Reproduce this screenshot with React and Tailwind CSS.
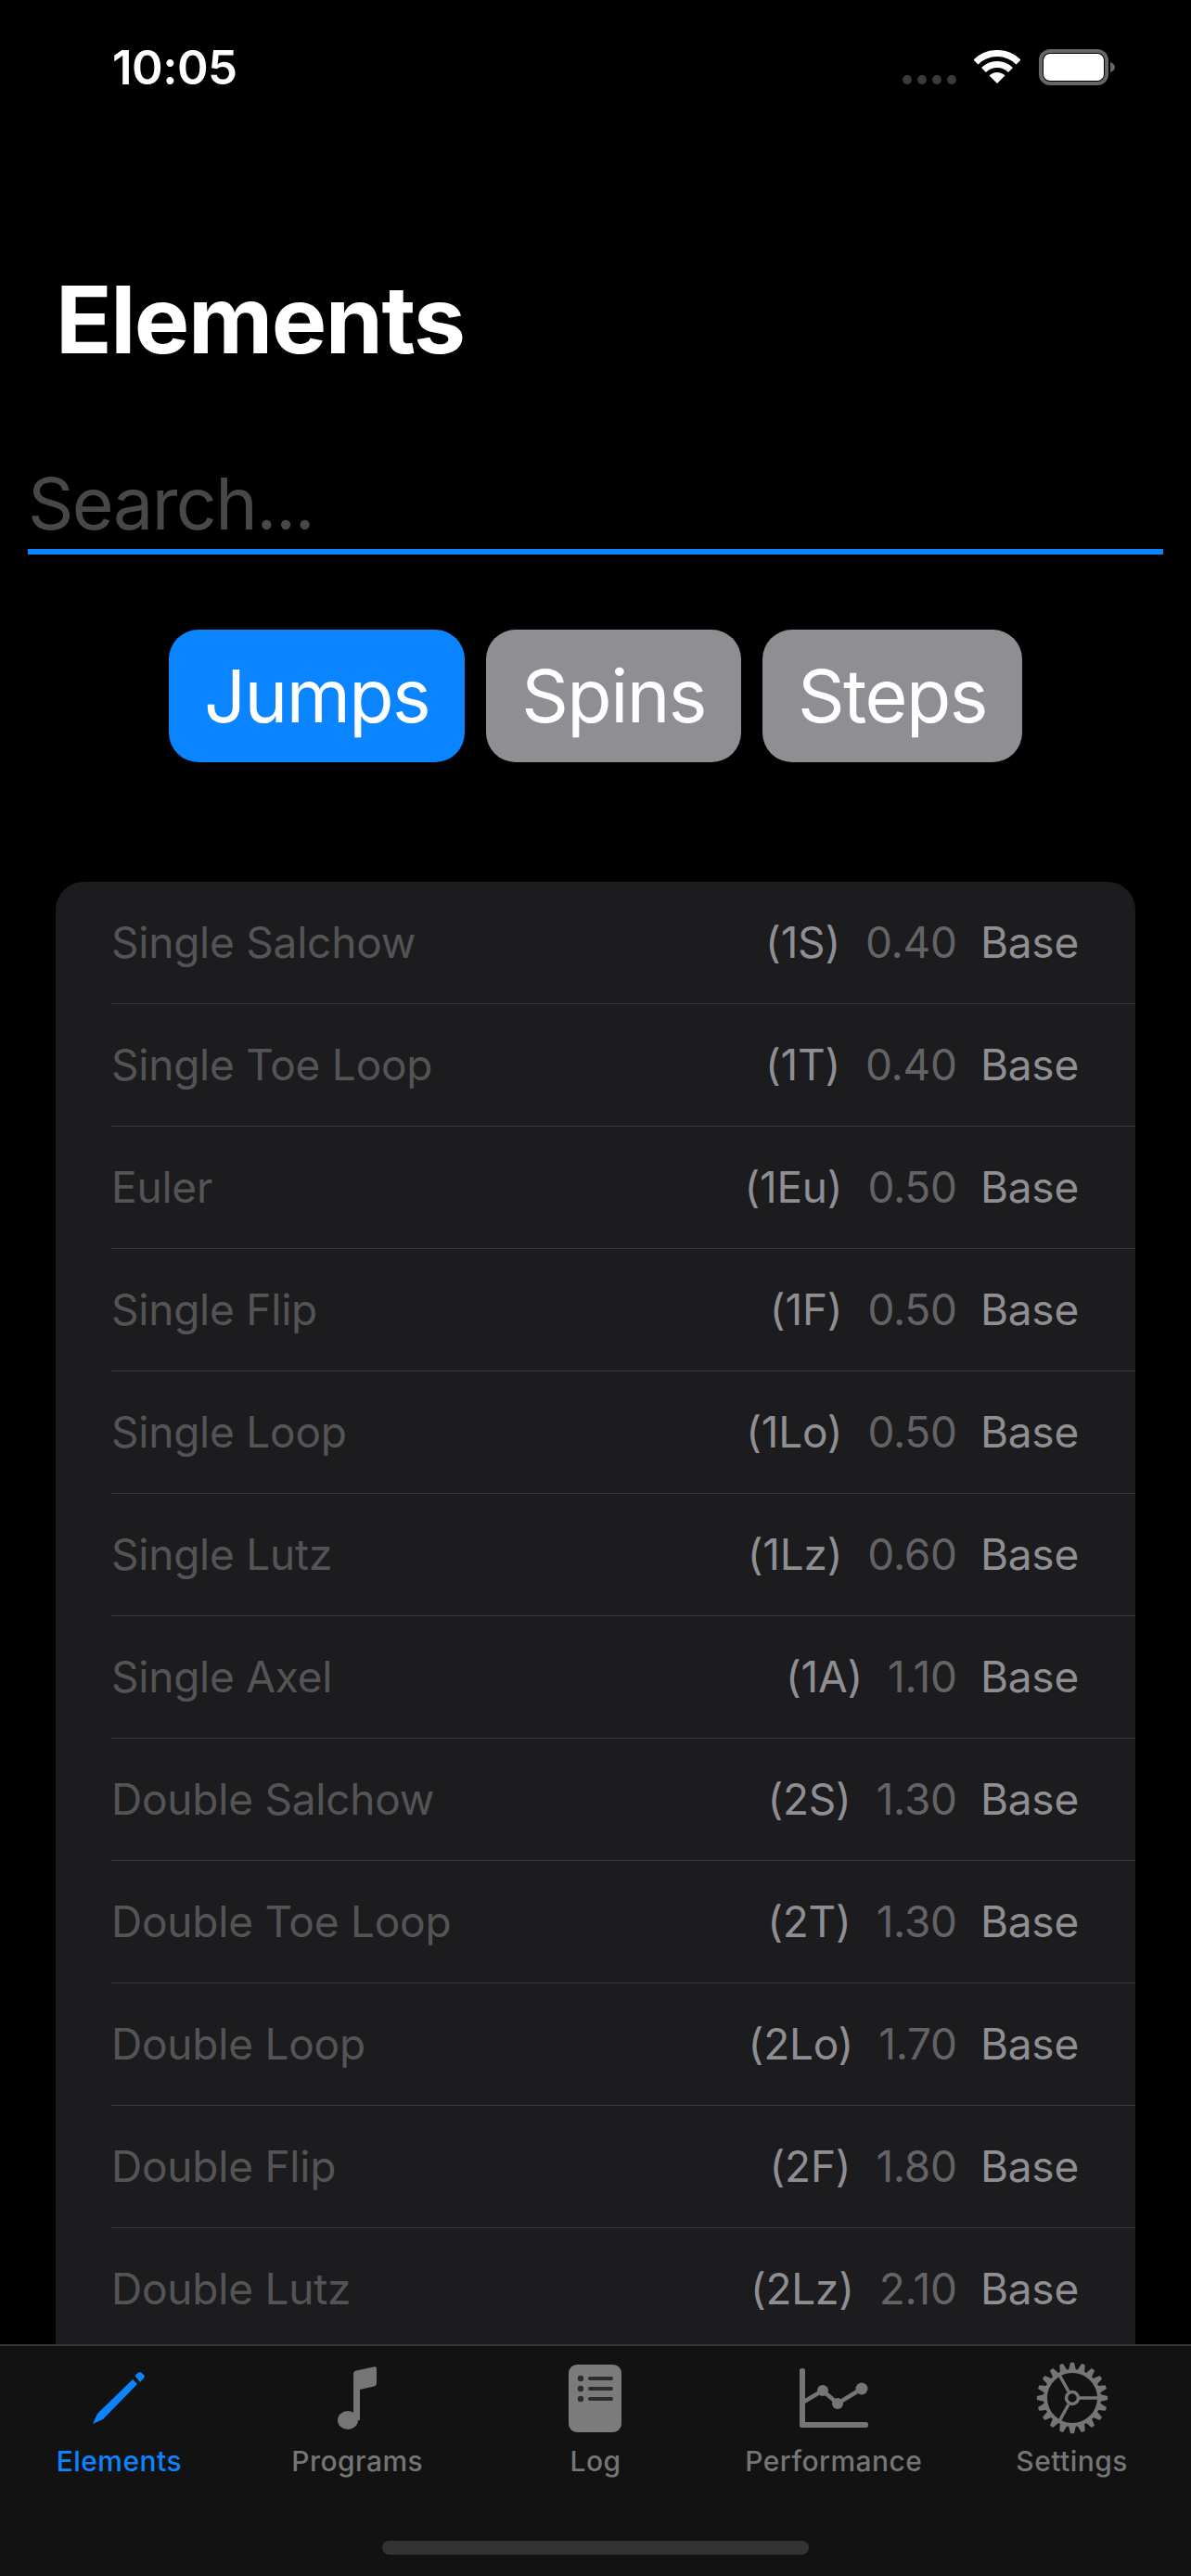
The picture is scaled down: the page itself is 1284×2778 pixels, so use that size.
import React from "react";

/* ── DATA ───────────────────────── */

const rows = [
  ["Single Salchow", "(1S)", "0.40"],
  ["Single Toe Loop", "(1T)", "0.40"],
  ["Euler", "(1Eu)", "0.50"],
  ["Single Flip", "(1F)", "0.50"],
  ["Single Loop", "(1Lo)", "0.50"],
  ["Single Lutz", "(1Lz)", "0.60"],
  ["Single Axel", "(1A)", "1.10"],
  ["Double Salchow", "(2S)", "1.30"],
  ["Double Toe Loop", "(2T)", "1.30"],
  ["Double Loop", "(2Lo)", "1.70"],
  ["Double Flip", "(2F)", "1.80"],
  ["Double Lutz", "(2Lz)", "2.10"],
];

const filters = [
  { label: "Jumps", active: true },
  { label: "Spins" },
  { label: "Steps" },
];

/* ── ICONS ───────────────────────── */

function Wifi() {
  return (
    <svg width="50" height="37" viewBox="0 0 50 37" fill="none">
      <path d="M2 13A32.5 32.5 0 0 1 48 13" stroke="#fff" strokeWidth="7" />
      <path d="M10.5 21.5A20.5 20.5 0 0 1 39.5 21.5" stroke="#fff" strokeWidth="7" />
      <path d="M25 36L16.5 27.5A12 12 0 0 1 33.5 27.5Z" fill="#fff" />
    </svg>
  );
}

function Battery() {
  return (
    <svg width="82" height="39" viewBox="0 0 82 39" fill="none">
      <rect x="2" y="2" width="71" height="35" rx="10" stroke="#666" strokeWidth="4" />
      <rect x="5" y="5" width="65" height="29" rx="7" fill="#fff" />
      <path d="M77 14C80 15 82 17 82 19.5C82 22 80 24 77 25Z" fill="#666" />
    </svg>
  );
}

function Pencil() {
  return (
    <svg width="56" height="56" viewBox="0 0 56 56" fill="#0a84ff">
      <path d="M0 56L5 45L43 8L48 13L11 51Z" />
      <path d="M45.5 4L49 .8C50 0 51 0 52 .6L55 3C56 4 56 5 55.4 6L51 11Z" />
    </svg>
  );
}

function Note() {
  return (
    <svg width="42" height="68" viewBox="0 0 42 68" fill="#757575">
      <ellipse cx="11" cy="58" rx="11" ry="10" />
      <path d="M17 58V9C17 6 18 5 20 4.5L39 .5C41 0 42 1 42 3V17C42 20 41 21 39 21.5L24 25V58Z" />
    </svg>
  );
}

function LogIcon() {
  return (
    <svg width="57" height="73" viewBox="0 0 57 73">
      <rect width="57" height="73" rx="9" fill="#7b7b7b" />
      {[15, 26, 37].map((y) => (
        <g key={y} fill="#2c2c2c">
          <circle cx="13" cy={y} r="3.2" />
          <rect x="21" y={y - 2} width="27" height="4" rx="2" />
        </g>
      ))}
    </svg>
  );
}

function Chart() {
  return (
    <svg width="74" height="64" viewBox="0 0 74 64" fill="#757575">
      <path d="M0 2Q0 0 3 0T6 2V58H72Q74 58 74 61T72 64H2Q0 64 0 62Z" />
      <path d="M3 37L25 24L41 38L67 22" fill="none" stroke="#757575" strokeWidth="4.5" />
      <circle cx="25" cy="24" r="6" />
      <circle cx="41" cy="38" r="6" />
      <circle cx="67" cy="22" r="6.5" />
    </svg>
  );
}

function Gear() {
  const teeth = Array.from({ length: 20 }, (_, i) => i * 18);
  return (
    <svg width="78" height="78" viewBox="-39 -39 78 78" fill="none" stroke="#757575">
      {teeth.map((a) => (
        <path key={a} d="M-4 -30L-2 -38.2H2L4 -30Z" fill="#757575" stroke="none" transform={`rotate(${a})`} />
      ))}
      <circle r="29" strokeWidth="4" />
      <circle r="6.5" strokeWidth="3.5" />
      <path d="M8 0H28M-4 -7L-14 -25M-4 7L-14 25" strokeWidth="3.5" />
    </svg>
  );
}

const tabs = [
  { label: "Elements", icon: Pencil, active: true },
  { label: "Programs", icon: Note },
  { label: "Log", icon: LogIcon },
  { label: "Performance", icon: Chart },
  { label: "Settings", icon: Gear },
];

/* ── COMPONENT ───────────────────── */

export default function App() {
  return (
    <main className="flex h-[2778px] w-[1284px] flex-col overflow-hidden bg-black font-['Inter',sans-serif] text-white">
      {/* status bar */}
      <div className="flex h-[285px] items-start justify-between pt-[53px] pl-[121px] pr-[82px]">
        <span className="text-[51px] leading-[39px] font-semibold tracking-[-0.01em]">10:05</span>
        <div className="flex h-[39px] items-end">
          <div className="mb-[1px] flex gap-[6px]">
            {[0, 1, 2, 3].map((i) => (
              <span key={i} className="h-[10px] w-[10px] rounded-full bg-[#3a3a3c]" />
            ))}
          </div>
          <div className="ml-[19px] mb-[1px]"><Wifi /></div>
          <div className="ml-[20px]"><Battery /></div>
        </div>
      </div>

      {/* title + search */}
      <h1 className="h-[120px] pl-[60px] text-[100px] leading-[120px] font-bold tracking-[-0.015em]">Elements</h1>
      <div className="mx-[30px] mt-[91px]">
        <input
          placeholder="Search..."
          className="h-[102px] w-full border-b-[6px] border-[#0a84ff] bg-transparent text-[77px] tracking-[-0.02em] outline-none placeholder:text-[#48484a]"
        />
      </div>

      {/* filter buttons */}
      <div className="mt-[81px] flex justify-center gap-[23px]">
        {filters.map((f) => (
          <button
            key={f.label}
            className={`h-[143px] rounded-[32px] px-[38px] text-[79px] tracking-[-0.02em] ${f.active ? "bg-[#0a84ff]" : "bg-[#8e8e93]"}`}
          >
            {f.label}
          </button>
        ))}
      </div>

      {/* list */}
      <div className="mt-[129px] min-h-0 flex-1 overflow-hidden">
        <div className="ml-[60px] mr-[60px] rounded-t-[30px] bg-[#1c1c1e] pl-[60px]">
          {rows.map((r) => (
            <div key={r[0]} className="flex h-[132px] items-center justify-between border-b border-[#3a3a3c] pr-[61px] text-[46px] tracking-[-0.005em]">
              <span className="text-[#545456]">{r[0]}</span>
              <div className="flex">
                <span className="mr-[27px] text-[#8e8e93]">{r[1]}</span>
                <span className="mr-[25px] text-[#636366]">{r[2]}</span>
                <span className="text-[#8e8e93]">Base</span>
              </div>
            </div>
          ))}
        </div>
      </div>

      {/* tab bar */}
      <nav className="flex h-[250px] shrink-0 flex-col items-center border-t-2 border-[#333335] bg-[#121212]">
        <div className="flex w-full pt-[16px]">
          {tabs.map((t) => {
            const Icon = t.icon;
            return (
              <div key={t.label} className="flex flex-1 flex-col items-center">
                <div className="flex h-[80px] items-center justify-center">
                  <Icon />
                </div>
                <span className={`mt-[10px] text-[30px] leading-[36px] font-medium tracking-[0.015em] ${t.active ? "text-[#0a84ff]" : "text-[#757575]"}`}>
                  {t.label}
                </span>
              </div>
            );
          })}
        </div>
        <div className="mt-[68px] h-[15px] w-[460px] rounded-full bg-[#333335]" />
      </nav>
    </main>
  );
}
